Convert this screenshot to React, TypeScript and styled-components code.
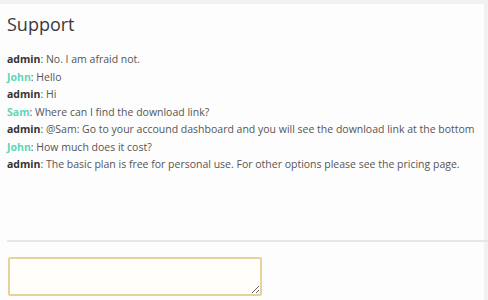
import React from "react";
import styled, { createGlobalStyle } from "styled-components";

const Global = createGlobalStyle`
  html, body { margin: 0; padding: 0; background: #f1f1f1; }
  body { font-family: "Open Sans", "Liberation Sans", sans-serif; }
`;

const Panel = styled.div`
  margin-top: 4px;
  width: 484px;
  height: 296px;
  background: #fdfdfd;
  box-sizing: border-box;
  padding: 8px 0 0 7px;
  display: flex;
  flex-direction: column;
`;

const Title = styled.h2`
  margin: 0;
  font-size: 18px;
  font-weight: 400;
  color: #3a3a3a;
  line-height: 24px;
`;

const Messages = styled.div`
  margin-top: 15px;
  height: 189px;
  display: flex;
  flex-direction: column;
`;

const Line = styled.div`
  font-size: 10.5px;
  line-height: 17.5px;
  color: #555;
  white-space: nowrap;
`;

const Name = styled.span<{ $admin?: boolean }>`
  font-weight: 700;
  color: ${(p) => (p.$admin ? "#333" : "#5fd6b4")};
`;

const Divider = styled.div`
  height: 2px;
  background: #e6e6e6;
  margin-right: -4px;
`;

const Input = styled.textarea`
  margin-top: 15px;
  margin-left: 1px;
  width: 254px;
  height: 39px;
  box-sizing: border-box;
  border: 2px solid #e8d29c;
  border-radius: 2px;
  background: #fffefb;
  outline: none;
  font-family: inherit;
`;

const msgs: [string, string][] = [
  ["admin", "No. I am afraid not."],
  ["John", "Hello"],
  ["admin", "Hi"],
  ["Sam", "Where can I find the download link?"],
  ["admin", "@Sam: Go to your accound dashboard and you will see the download link at the bottom"],
  ["John", "How much does it cost?"],
  ["admin", "The basic plan is free for personal use. For other options please see the pricing page."],
];

export default function App() {
  return (
    <>
      <Global />
      <Panel>
        <Title>Support</Title>
        <Messages>
          {msgs.map(([n, t], i) => (
            <Line key={i}>
              <Name $admin={n === "admin"}>{n}</Name>: {t}
            </Line>
          ))}
        </Messages>
        <Divider />
        <Input />
      </Panel>
    </>
  );
}
